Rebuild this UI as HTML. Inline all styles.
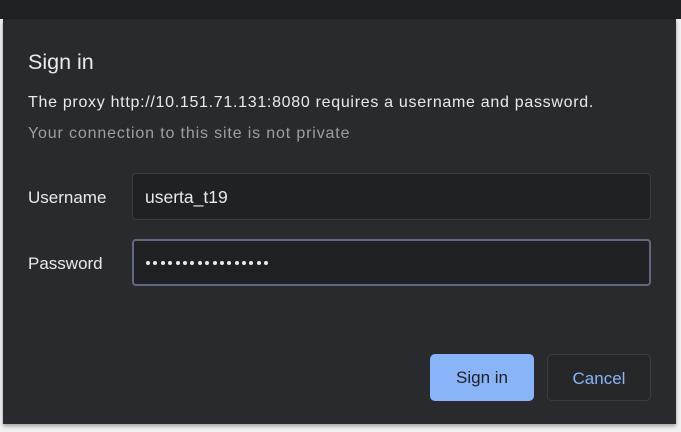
<!DOCTYPE html>
<html><head><style>
*{margin:0;padding:0;box-sizing:border-box}
body{width:681px;height:432px;background:#f1f1f1;position:relative;overflow:hidden;font-family:"Liberation Sans",sans-serif}
.top{position:absolute;left:0;top:0;width:681px;height:19px;background:#202124}
.dlg{position:absolute;left:3px;top:19px;width:673px;height:405px;background:#292a2d;box-shadow:0 2px 4px rgba(0,0,0,.35)}
.t{position:absolute;color:#e8eaed;white-space:nowrap}
.inp{position:absolute;left:132px;width:519px;height:47px;background:#202124;border:1px solid #3c3d40;border-radius:4px}
.btn{position:absolute;top:354px;width:104px;height:47px;border-radius:5px;font-size:17px;text-align:center;line-height:47px}
.dots{position:absolute;left:146px;top:261px;display:flex;gap:3.4px}
.dots i{display:block;width:4px;height:4px;border-radius:50%;background:#e8eaed}
</style></head><body>
<div class="top"></div>
<div class="dlg"></div>
<div class="t" style="left:28px;top:50px;font-size:21.5px">Sign in</div>
<div class="t" style="left:28px;top:94px;font-size:16px;letter-spacing:0.7px">The proxy http://10.151.71.131:8080 requires a username and password.</div>
<div class="t" style="left:28px;top:125px;font-size:16px;letter-spacing:0.85px;color:#9aa0a6">Your connection to this site is not private</div>
<div class="t" style="left:28px;top:188px;font-size:17px">Username</div>
<div class="t" style="left:28px;top:254px;font-size:17px">Password</div>
<div class="inp" style="top:173px"></div>
<div class="inp" style="top:239px;border:2px solid #5f6a80"></div>
<div class="t" style="left:145px;top:187px;font-size:17.5px">userta_t19</div>
<div class="dots"><i></i><i></i><i></i><i></i><i></i><i></i><i></i><i></i><i></i><i></i><i></i><i></i><i></i><i></i><i></i><i></i><i></i></div>
<div class="btn" style="left:430px;background:#8ab4f8;color:#202124">Sign in</div>
<div class="btn" style="left:547px;border:1px solid #3c3d40;color:#8ab4f8;background:#262729">Cancel</div>
</body></html>
